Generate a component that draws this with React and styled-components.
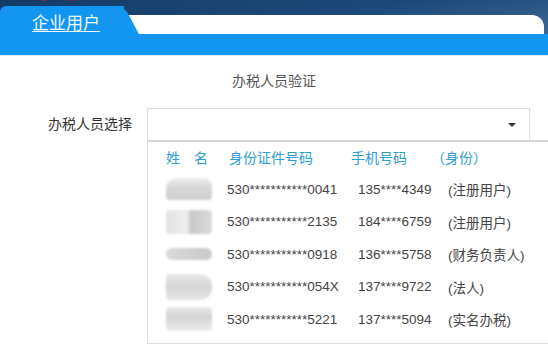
import styled, { createGlobalStyle } from 'styled-components'

const Global = createGlobalStyle`
  html, body { margin: 0; padding: 0; background: #fff; overflow: hidden; }
  body {
    width: 548px;
    font-family: "Liberation Sans", "Noto Sans CJK SC", sans-serif;
    color: #333;
  }
`;

const Header = styled.header`
  position: relative;
  height: 56px;
  overflow: hidden;
  display: flex;
  flex-direction: column;
  background: #1296f2;
  border-bottom: 1px solid #d8eefc;
  box-sizing: border-box;
`;

const Banner = styled.span`
  position: absolute;
  top: -31px;
  left: 0;
  font-size: 30px;
  line-height: 36px;
  font-weight: bold;
  letter-spacing: 2px;
  color: #c41230;
  z-index: 0;
`;

const TabRow = styled.div`
  height: 34px;
  display: flex;
  align-items: flex-end;
  background: linear-gradient(172deg, #143b66 0%, #1c4a7a 55%, #3c6994 100%);
`;

const Tab = styled.div`
  position: relative;
  z-index: 1;
  width: 124px;
  height: 28px;
  box-sizing: border-box;
  padding: 4px 0 0 32px;
  background: #1296f2;
  border-top-left-radius: 6px;
  &::after {
    content: '';
    position: absolute;
    top: 0;
    left: 106px;
    width: 18px;
    height: 28px;
    background: #1296f2;
    border-top-right-radius: 8px;
    transform-origin: top left;
    transform: skewX(28deg);
  }
`;

const TabLabel = styled.span`
  position: relative;
  z-index: 2;
  font-family: "Noto Sans CJK SC", sans-serif;
  font-size: 17px;
  line-height: 24px;
  color: #f2faff;
  text-decoration: underline;
  text-underline-offset: 2px;
`;

const Band = styled.div`
  flex: 1;
  height: 19px;
  margin-right: 4px;
  background: #fff;
  border-top-right-radius: 12px;
`;

const BlueBar = styled.div`
  flex: 1;
  background: #1296f2;
`;

const Main = styled.main`
  display: flex;
  flex-direction: column;
`;

const Title = styled.div`
  margin-top: 15px;
  text-align: center;
  font-size: 14px;
  line-height: 20px;
  color: #555;
`;

const FormRow = styled.div`
  margin-top: 17px;
  display: grid;
  grid-template-columns: 132px 383px;
  column-gap: 15px;
  align-items: start;
`;

const Label = styled.label`
  height: 32px;
  line-height: 32px;
  text-align: right;
  font-size: 14px;
  color: #333;
`;

const Field = styled.div`
  display: flex;
  flex-direction: column;
`;

const Select = styled.div`
  height: 32px;
  box-sizing: border-box;
  border: 1px solid #dcdcdc;
  border-bottom: none;
  display: flex;
  align-items: center;
  justify-content: flex-end;
  padding-right: 13px;
`;

const Caret = styled.span`
  width: 0;
  height: 0;
  border-left: 4px solid transparent;
  border-right: 4px solid transparent;
  border-top: 4px solid #333;
`;

const Menu = styled.div`
  width: 412px;
  box-sizing: border-box;
  border-top: 2px solid #d6d6d6;
  border-left: 1px solid #dedede;
  border-bottom: 1px solid #dedede;
  padding: 6px 0 7px 18px;
`;

const HeadRow = styled.div`
  display: grid;
  grid-template-columns: 63px 122px 80px auto;
  height: 20px;
  line-height: 20px;
  margin-bottom: 5px;
  font-size: 14px;
  color: #2e9dcf;
`;

const Row = styled.div`
  display: grid;
  grid-template-columns: 61px 131px 90px auto;
  align-items: center;
  height: 32.5px;
  font-size: 13.5px;
  color: #444;
`;

const blobs = [
  'linear-gradient(180deg, #eee 0%, #d6d6d6 45%, #cfcfcf 100%)',
  'linear-gradient(90deg, #e2e2e2 0%, #eee 45%, #c8c8c8 55%, #dcdcdc 100%)',
  'linear-gradient(90deg, #d9d9d9 0%, #d0d0d0 55%, #c9c9c9 100%)',
  'linear-gradient(180deg, #e9e9e9 0%, #d4d4d4 50%, #e6e6e6 100%)',
  'linear-gradient(180deg, #eaeaea 0%, #d2d2d2 40%, #ededed 100%)',
];

const Blob = styled.span`
  width: 46px;
  height: ${p => p.$h}px;
  border-radius: ${p => p.$r};
  background: ${p => blobs[p.$v]};
  filter: blur(1.2px);
`;

const people = [
  { id: '530***********0041', phone: '135****4349', role: '(注册用户)', h: 22, r: '10px 8px 4px 4px' },
  { id: '530***********2135', phone: '184****6759', role: '(注册用户)', h: 24, r: '4px' },
  { id: '530***********0918', phone: '136****5758', role: '(财务负责人)', h: 12, r: '6px' },
  { id: '530***********054X', phone: '137****9722', role: '(法人)', h: 26, r: '4px 12px 12px 4px' },
  { id: '530***********5221', phone: '137****5094', role: '(实名办税)', h: 24, r: '4px' },
];

function App() {
  return (
    <>
      <Global />
      <Header>
        <Banner aria-hidden="true">电子税务</Banner>
        <TabRow>
          <Tab><TabLabel>企业用户</TabLabel></Tab>
          <Band />
        </TabRow>
        <BlueBar />
      </Header>
      <Main>
        <Title>办税人员验证</Title>
        <FormRow>
          <Label>办税人员选择</Label>
          <Field>
            <Select><Caret /></Select>
            <Menu>
              <HeadRow>
                <span>姓　名</span>
                <span>身份证件号码</span>
                <span>手机号码</span>
                <span>（身份）</span>
              </HeadRow>
              {people.map((p, i) => (
                <Row key={i}>
                  <Blob $v={i} $h={p.h} $r={p.r} />
                  <span>{p.id}</span>
                  <span>{p.phone}</span>
                  <span>{p.role}</span>
                </Row>
              ))}
            </Menu>
          </Field>
        </FormRow>
      </Main>
    </>
  )
}

export default App;
